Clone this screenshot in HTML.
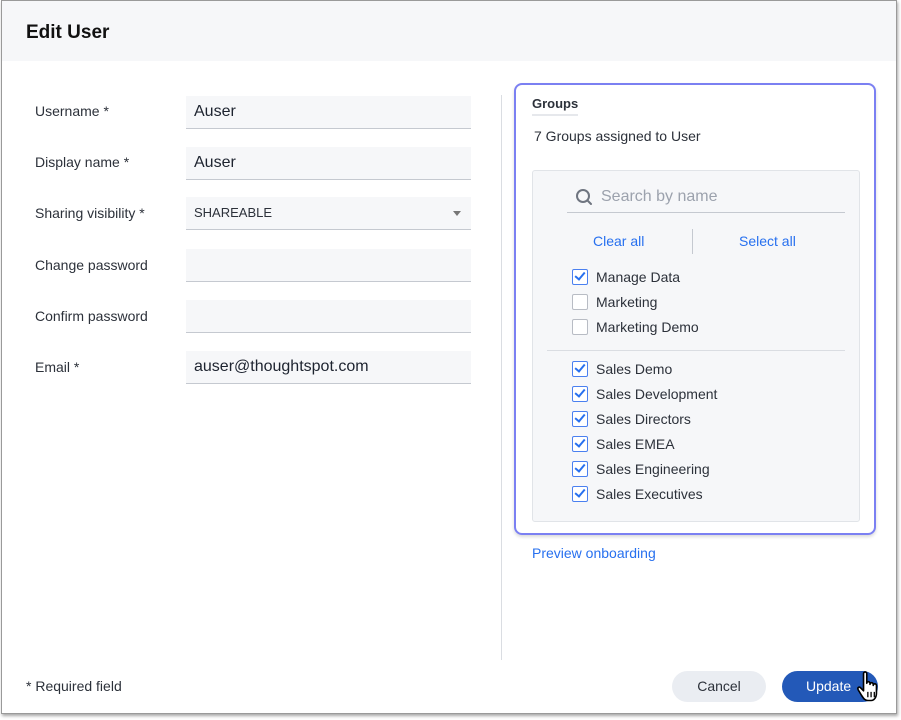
<!DOCTYPE html>
<html><head><style>
*{box-sizing:border-box;margin:0;padding:0}
body{width:901px;height:720px;background:#fff;font-family:"Liberation Sans",sans-serif;position:relative;overflow:hidden;color:#1d232f}
.dlg{position:absolute;left:1px;top:0;width:896px;height:714px;border:1px solid #9a9a9a;box-shadow:1px 2px 3px rgba(0,0,0,.35);background:#fff}
.hdr{position:absolute;left:0;top:0;width:100%;height:60px;background:#f6f7f9}
.abs{position:absolute}
.lbl{position:absolute;left:35px;font-size:14px;color:#2c313a}
.fld{position:absolute;left:186px;width:285px;height:33px;background:#f6f7f9;border-bottom:1px solid #c5c9d0;font-size:16px;padding:7px 8px 0;color:#1d232f}
.cb{position:absolute;left:572px;width:16px;height:16px;border:1.5px solid #b8bcc4;border-radius:2px;background:#fff}
.cb.on{border-color:#4a80f0}
.cb.on::after{content:"";position:absolute;left:4px;top:0px;width:4px;height:8px;border:solid #2770ef;border-width:0 2px 2px 0;transform:rotate(40deg)}
.it{position:absolute;left:596px;font-size:14px;color:#2c313a}
</style></head><body>
<div class="dlg">
<div class="hdr"></div>
<div class="abs" style="left:24px;top:21px;font-size:19px;font-weight:bold;color:#111">Edit User</div>
</div>
<div class="lbl" style="top:103px">Username *</div>
<div class="fld" style="top:96px">Auser</div>
<div class="lbl" style="top:154px">Display name *</div>
<div class="fld" style="top:147px">Auser</div>
<div class="lbl" style="top:205px">Sharing visibility *</div>
<div class="fld" style="top:197px;font-size:13px;padding-top:8px;color:#2c313a">SHAREABLE<span style="position:absolute;right:10px;top:14px;border:4px solid transparent;border-top:5px solid #777"></span></div>
<div class="lbl" style="top:257px">Change password</div>
<div class="fld" style="top:249px"></div>
<div class="lbl" style="top:308px">Confirm password</div>
<div class="fld" style="top:300px"></div>
<div class="lbl" style="top:359px">Email *</div>
<div class="fld" style="top:351px">auser@thoughtspot.com</div>
<div class="abs" style="left:501px;top:95px;width:1px;height:565px;background:#dadde2"></div>

<div class="abs" style="left:514px;top:83px;width:362px;height:452px;border:2px solid #7b80f2;border-radius:8px;box-shadow:0 2px 3px rgba(0,0,0,.15)"></div>
<div class="abs" style="left:532px;top:96px;font-size:13px;font-weight:bold;color:#2c313a;padding-bottom:3px;border-bottom:2px solid #e6e8ec">Groups</div>
<div class="abs" style="left:534px;top:128px;font-size:14px;color:#2c313a">7 Groups assigned to User</div>
<div class="abs" style="left:532px;top:170px;width:328px;height:352px;background:#f6f7f9;border:1px solid #e1e4e8;border-radius:3px"></div>
<svg class="abs" style="left:575px;top:188px" width="18" height="18" viewBox="0 0 18 18"><circle cx="8" cy="8" r="6" fill="none" stroke="#6f7580" stroke-width="2"/><path d="M12.5 12.5 L16 16" stroke="#6f7580" stroke-width="2" stroke-linecap="round"/></svg>
<div class="abs" style="left:601px;top:188px;font-size:16px;color:#9ca2ad">Search by name</div>
<div class="abs" style="left:567px;top:212px;width:278px;height:1px;background:#c5c9d0"></div>
<div class="abs" style="left:593px;top:233px;font-size:14px;color:#2770ef">Clear all</div>
<div class="abs" style="left:692px;top:229px;width:1px;height:25px;background:#c5c9d0"></div>
<div class="abs" style="left:739px;top:233px;font-size:14px;color:#2770ef">Select all</div>
<div class="cb on" style="top:269px"></div><div class="it" style="top:269px">Manage Data</div>
<div class="cb" style="top:294px"></div><div class="it" style="top:294px">Marketing</div>
<div class="cb" style="top:319px"></div><div class="it" style="top:319px">Marketing Demo</div>
<div class="abs" style="left:547px;top:350px;width:298px;height:1px;background:#dadde2"></div>
<div class="cb on" style="top:361px"></div><div class="it" style="top:361px">Sales Demo</div>
<div class="cb on" style="top:386px"></div><div class="it" style="top:386px">Sales Development</div>
<div class="cb on" style="top:411px"></div><div class="it" style="top:411px">Sales Directors</div>
<div class="cb on" style="top:436px"></div><div class="it" style="top:436px">Sales EMEA</div>
<div class="cb on" style="top:461px"></div><div class="it" style="top:461px">Sales Engineering</div>
<div class="cb on" style="top:486px"></div><div class="it" style="top:486px">Sales Executives</div>
<div class="abs" style="left:532px;top:545px;font-size:14px;color:#2770ef">Preview onboarding</div>

<div class="abs" style="left:26px;top:678px;font-size:14px;color:#2c313a">* Required field</div>
<div class="abs" style="left:672px;top:671px;width:94px;height:31px;border-radius:16px;background:#eaedf2;font-size:14px;color:#2c313a;text-align:center;line-height:31px">Cancel</div>
<div class="abs" style="left:782px;top:671px;width:96px;height:31px;border-radius:16px;background:#2359b8;font-size:14px;color:#fff;line-height:31px;padding-left:24px">Update</div>
<svg class="abs" style="left:856px;top:670px" width="28" height="33" viewBox="0 0 26 30"><path d="M7 3 C7 1 10 1 10 3 L10 12 C10 10 13 10 13 12 L13 13 C13 11 16 11 16 13 L16 14 C16 12 19 12 19 14 L19 21 C19 25 17 28 14 28 L11 28 C8 28 7 26 5 23 L2 18 C1 16 3 15 4 16 L7 19 Z" fill="#fff" stroke="#000" stroke-width="1.5" stroke-linejoin="round"/><path d="M11 20v5M14 20v5M17 20v5" stroke="#000" stroke-width="1.2"/></svg>
</body></html>
